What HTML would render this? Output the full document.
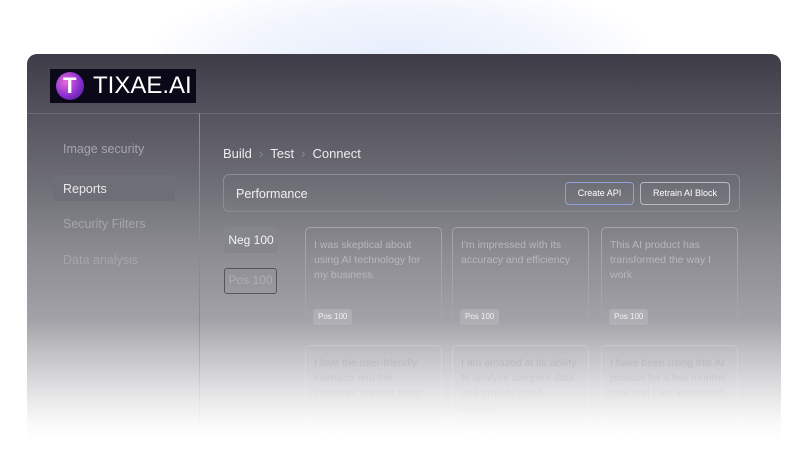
<!DOCTYPE html>
<html><head><meta charset="utf-8"><style>
*{margin:0;padding:0;box-sizing:border-box}
html,body{width:800px;height:449px;overflow:hidden}
body{background:#fff;font-family:"Liberation Sans",sans-serif;position:relative}
.glow{position:absolute;left:150px;top:-20px;width:500px;height:110px;border-radius:50%;background:radial-gradient(ellipse at 50% 80%,#e4ecfb 0%,#f3f6fd 50%,rgba(255,255,255,0) 75%)}
.panel{position:absolute;left:27px;top:54px;width:754px;height:388px;border-radius:10px 10px 0 0;overflow:hidden;
background:linear-gradient(#3c3b46 0px,#55545e 60px,#6e6e76 130px,#8c8c92 200px,#a0a0a6 260px,#aaaaaf 300px)}
.fade{position:absolute;left:0;top:0;width:800px;height:449px;background:linear-gradient(rgba(255,255,255,0) 320px,rgba(255,255,255,.35) 360px,rgba(255,255,255,.75) 400px,rgba(255,255,255,.95) 425px,#fff 440px);pointer-events:none}
.logo{position:absolute;left:23px;top:15px;width:146px;height:34px;background:#0b0818;color:#fff;font-size:24px;line-height:34px;padding-left:43px;overflow:hidden;white-space:nowrap}
.logo .ic{position:absolute;left:6px;top:3px;width:28px;height:28px;border-radius:50%;background:radial-gradient(circle at 35% 35%,#e86ad8,#8a2fd0 55%,#3b1a80)}
.logo .ic:after{content:"T";position:absolute;left:7px;top:0;font-size:22px;line-height:28px;color:#fff;font-weight:bold}
.hline{position:absolute;left:0;top:59px;width:754px;height:1px;background:#6d6c75}
.vline{position:absolute;left:172px;top:59px;width:1px;height:340px;background:#8a8a92}
.nav{position:absolute;left:36px;color:#a5a5ac;font-size:12.5px}
.rep{position:absolute;left:26px;top:121px;width:122px;height:26px;background:#6e6e76;border-radius:4px;color:#e8e8ec;font-size:12.5px;padding:7px 10px}
.crumb{position:absolute;left:196px;top:92px;color:#ececf0;font-size:13px}
.crumb span{color:#8a8a92;margin:0 7px}
.perf{position:absolute;left:196px;top:120px;width:517px;height:38px;border:1px solid #8c8c94;border-radius:6px;color:#f0f0f4;font-size:12.5px;padding:12px 12px}
.btn{position:absolute;top:7px;height:23px;border:1px solid #b8b8c0;border-radius:4px;font-size:9px;color:#fff;text-align:center;line-height:21px}
.neg{position:absolute;top:173px;width:54px;height:26px;background:#85858c;border-radius:3px;color:#f4f4f6;font-size:12px;line-height:26px;text-align:center}
.pos{position:absolute;top:214px;width:53px;height:26px;border:1.5px solid #55555d;border-radius:3px;color:#aeaeb4;font-size:12px;line-height:23px;text-align:center}
.card{position:absolute;width:137px;height:107px;border:1px solid #a4a4aa;border-radius:5px;color:#b7b7bc;font-size:10.5px;line-height:15px;padding:10px 8px}
.r2{color:#929298;border-color:#b8b8bd}
.tag{position:absolute;left:7px;bottom:8px;background:#aeaeb3;border-radius:3px;font-size:8px;color:#f2f2f4;padding:3px 5px;line-height:10px}
</style></head><body>
<div class="glow"></div>
<div class="panel">
 <div class="logo"><div class="ic"></div>TIXAE.AI</div>
 <div class="hline"></div><div class="vline"></div>
 <div class="nav" style="top:88px">Image security</div>
 <div class="rep">Reports</div>
 <div class="nav" style="top:163px">Security Filters</div>
 <div class="nav" style="top:199px">Data analysis</div>
 <div class="crumb">Build<span>›</span>Test<span>›</span>Connect</div>
 <div class="perf">Performance
  <div class="btn" style="left:341px;width:69px;border-color:#8da2d8">Create API</div>
  <div class="btn" style="left:416px;width:90px">Retrain AI Block</div>
 </div>
 <div class="neg" style="left:197px">Neg 100</div>
 <div class="pos" style="left:197px">Pos 100</div>
 <div class="card" style="left:278px;top:173px">I was skeptical about using AI technology for my business.<div class="tag">Pos 100</div></div>
 <div class="card" style="left:425px;top:173px">I'm impressed with its accuracy and efficiency<div class="tag">Pos 100</div></div>
 <div class="card" style="left:574px;top:173px">This AI product has transformed the way I work<div class="tag">Pos 100</div></div>
 <div class="card r2" style="left:278px;top:291px">I love the user-friendly interface and the customer support team<div class="tag">Pos 100</div></div>
 <div class="card r2" style="left:425px;top:291px">I am amazed at its ability to analyze complex data and provide good insights<div class="tag">Pos 100</div></div>
 <div class="card r2" style="left:574px;top:291px">I have been using this AI product for a few months now and I am impressed.<div class="tag">Pos 100</div></div>
</div>
<div class="fade"></div>
</body></html>
